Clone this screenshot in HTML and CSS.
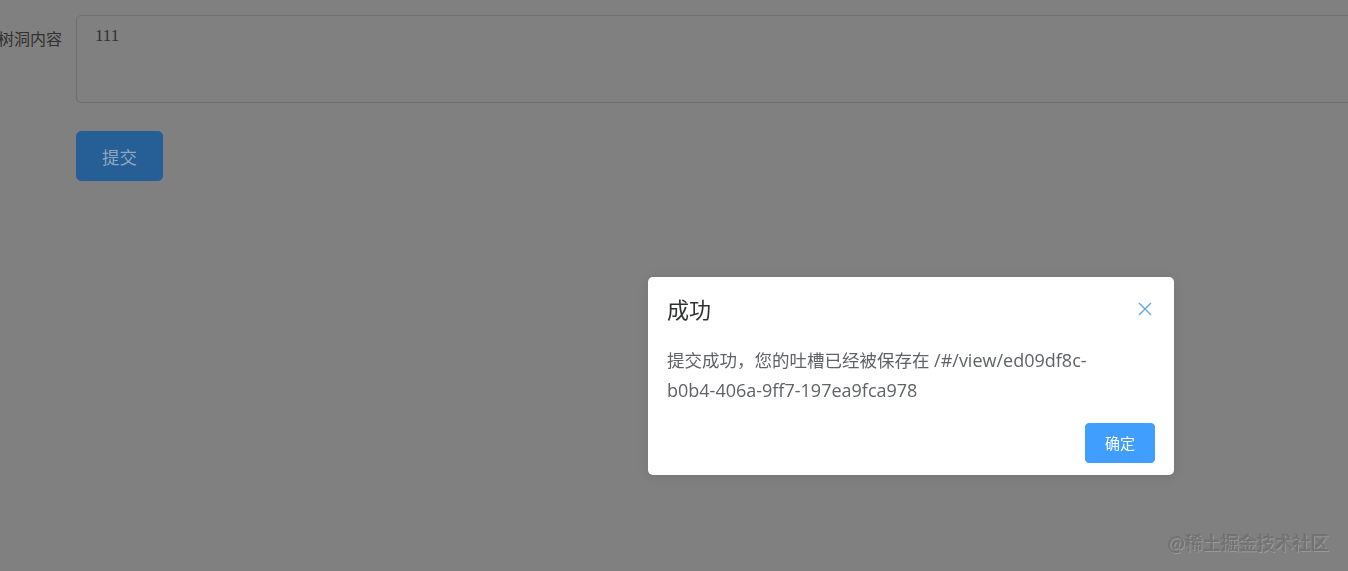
FILE: index.html
```html
<!DOCTYPE html>
<html lang="zh-CN">
<head>
<meta charset="utf-8">
<title>树洞</title>
<link rel="stylesheet" href="styles.css">
</head>
<body>
<form class="form">
  <div class="form-item">
    <label class="form-label">树洞内容</label>
    <div class="form-content">
      <div class="textarea">111</div>
    </div>
  </div>
  <div class="form-item form-actions">
    <button type="button" class="btn-submit">提交</button>
  </div>
</form>

<div class="mask">
  <div class="msgbox">
    <div class="msgbox-header">
      <span class="msgbox-title">成功</span>
      <span class="msgbox-close">
        <svg width="14" height="14" viewBox="0 0 14 14"><path d="M1 1L13 13M13 1L1 13" stroke="#5ea6e0" stroke-width="1.4" fill="none"/></svg>
      </span>
    </div>
    <div class="msgbox-content">提交成功，您的吐槽已经被保存在 <span class="latin">/#/view/ed09df8c-</span><span class="latin nobr">b0b4-406a-9ff7-197ea9fca978</span></div>
    <div class="msgbox-btns">
      <button type="button" class="btn-ok">确定</button>
    </div>
  </div>
</div>

<div class="watermark">@稀土掘金技术社区</div>
</body>
</html>
```

FILE: styles.css
```css
html, body {
  margin: 0;
  padding: 0;
  width: 1348px;
  height: 571px;
  overflow: hidden;
  background: #808080;
  font-family: "Open Sans", "Noto Sans CJK SC", sans-serif;
}

.form {
  display: flex;
  flex-direction: column;
  gap: 28px;
  padding-top: 15px;
  margin-left: -26px;
}

.form-item {
  display: flex;
  align-items: flex-start;
}

.form-label {
  width: 102px;
  flex: none;
  box-sizing: border-box;
  padding-right: 14px;
  text-align: right;
  font-family: "Noto Sans CJK SC", sans-serif;
  font-size: 16px;
  line-height: 46px;
  color: #303030;
}

.form-content {
  flex: none;
}

.textarea {
  width: 1320px;
  height: 88px;
  box-sizing: border-box;
  border: 1px solid #6e6f73;
  border-radius: 5px;
  padding: 8px 18px;
  font-family: "Liberation Serif", serif;
  font-size: 17px;
  line-height: 24px;
  color: #303030;
}

.form-actions {
  padding-left: 102px;
}

.btn-submit {
  width: 87px;
  height: 50px;
  border: 1px solid #265e96;
  border-radius: 5px;
  background: #265e96;
  color: #8fa6be;
  font-family: "Noto Sans CJK SC", sans-serif;
  font-size: 17.5px;
  padding: 0;
}

.mask {
  position: fixed;
  inset: 0;
  display: flex;
  align-items: flex-start;
}

.msgbox {
  margin-left: 648px;
  margin-top: 277px;
  width: 526px;
  box-sizing: border-box;
  background: #fff;
  border-radius: 5px;
  box-shadow: 0 2px 12px rgba(0, 0, 0, 0.1);
  padding-bottom: 12px;
}

.msgbox-header {
  position: relative;
  padding: 19px 19px 12.5px;
}

.msgbox-title {
  display: block;
  font-family: "Noto Sans CJK SC", sans-serif;
  font-size: 22px;
  line-height: 24px;
  color: #303133;
}

.msgbox-close {
  position: absolute;
  top: 25px;
  right: 22px;
  width: 14px;
  height: 14px;
  display: flex;
}

.msgbox-content {
  padding: 12px 19px;
  font-size: 17.5px;
  line-height: 30px;
  color: #606266;
}

.latin {
  font-size: 18px;
}

.nobr {
  white-space: nowrap;
}

.msgbox-btns {
  display: flex;
  justify-content: flex-end;
  padding: 6px 19px 0;
}

.btn-ok {
  width: 70px;
  height: 40px;
  border: 1px solid #409eff;
  border-radius: 4px;
  background: #409eff;
  color: #fff;
  font-family: "Noto Sans CJK SC", sans-serif;
  font-size: 15px;
  padding: 0;
}

.watermark {
  position: fixed;
  left: 1168px;
  top: 529px;
  font-family: "Noto Sans CJK SC", sans-serif;
  font-size: 18px;
  line-height: 26px;
  color: #737373;
  text-shadow: 1px 1px 0 rgba(255, 255, 255, 0.2), -1px -1px 0 rgba(0, 0, 0, 0.12);
  white-space: nowrap;
}
```
